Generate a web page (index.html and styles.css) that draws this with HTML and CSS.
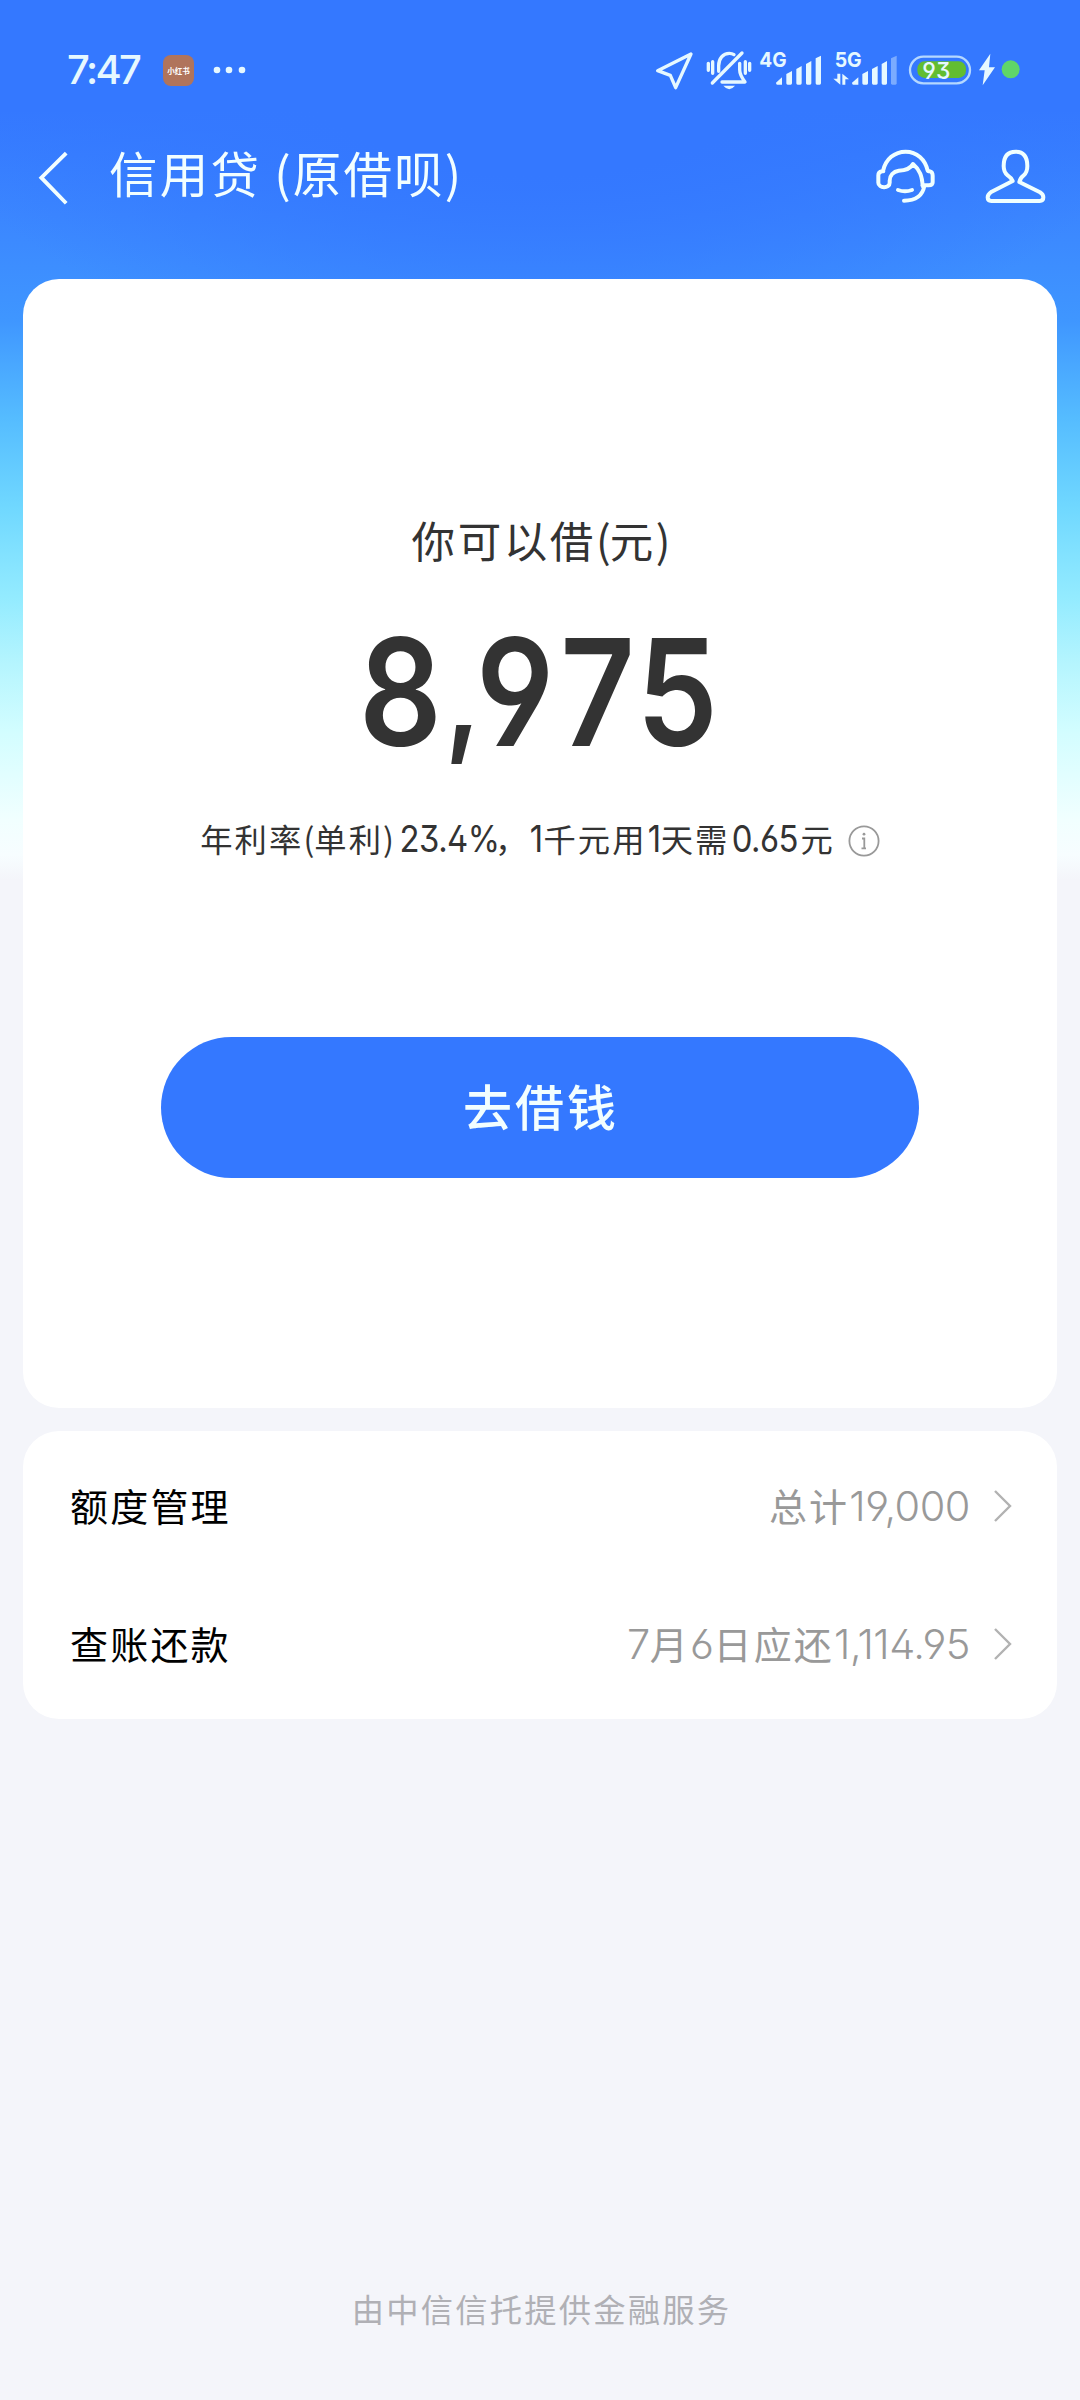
FILE: index.html
```html
<!DOCTYPE html>
<html lang="zh-CN">
<head>
<meta charset="utf-8">
<title>信用贷</title>
<link rel="stylesheet" href="styles.css">
</head>
<body>
<div class="screen">
  <div class="status">
    <span class="time">7:47</span>
    <span class="app-badge">小红书</span>
    <svg class="dots" viewBox="0 0 36 10"><circle cx="5" cy="5" r="3.3"/><circle cx="17" cy="5" r="3.3"/><circle cx="30" cy="5" r="3.3"/></svg>
    <div class="status-icons">
      <svg width="46.67" height="80" viewBox="40 0 140 240"><path class="line" d="M154 72L54 122L92 136L108 173Z"/></svg>
      <svg width="55" height="80" viewBox="180 0 165 240"><path class="line" d="M306 69L217 159M236 124V107C236 86 249 70 268 70Q276 70 282 74M299 100V119Q299 134 315 156H246M205 100V121M218 95V130M329 100V121M316 95V130"/><path class="fill" d="M250 167H285Q268 188 250 167Z"/></svg>
      <svg width="73.33" height="80" viewBox="345 0 220 240"><text class="net" x="358" y="111" textLength="82" lengthAdjust="spacingAndGlyphs">4G</text><path class="fill" d="M408 158L426 142V164H412Q408 164 408 158ZM439 132L456 123V160Q456 164 452 164H443Q439 164 439 160ZM469 117L485 108V160Q485 164 481 164H473Q469 164 469 160ZM498 102L514 93V160Q514 164 510 164H502Q498 164 498 160ZM527 85L543 77V160Q543 164 539 164H531Q527 164 527 160Z"/></svg>
      <svg width="75" height="80" viewBox="565 0 225 240"><text class="net" x="585" y="111" textLength="81" lengthAdjust="spacingAndGlyphs">5G</text><path class="fill" d="M637 158L656 142V164H641Q637 164 637 158ZM668 132L685 123V160Q685 164 681 164H672Q668 164 668 160ZM697 117L714 108V160Q714 164 710 164H701Q697 164 697 160ZM726 102L742 93V160Q742 164 738 164H730Q726 164 726 160ZM593 131H602V164L581 146H593ZM608 164V131L628 148H617V164Z"/><path class="fill" opacity=".4" d="M754 85L771 77V160Q771 164 767 164H758Q754 164 754 160Z"/></svg>
      <svg width="71.67" height="80" viewBox="790 0 215 240"><rect x="811" y="80" width="180" height="80" rx="40" fill="none" stroke="#b5d8ff" stroke-width="7"/><rect x="833" y="94" width="146" height="50" rx="22" fill="#62bd31"/><text class="level" x="848" y="146" textLength="84" lengthAdjust="spacingAndGlyphs">93</text></svg>
      <svg width="23.33" height="80" viewBox="1005 0 70 240"><path class="fill" d="M1051 71L1017 121H1034L1028 166L1065 112H1047Z"/></svg>
      <svg width="41.67" height="80" viewBox="1075 0 125 240"><circle cx="1113" cy="118" r="27" fill="#5fd669"/></svg>
    </div>
  </div>

  <div class="navbar">
    <svg class="back" viewBox="0 0 100 160"><path d="M92 12L21 82L92 155"/></svg>
    <h1>信用贷 (原借呗)</h1>
    <svg class="nav-icons" viewBox="90 0 630 270"><path d="M129 123C137 87 164 65 197 65C230 65 256 88 263 122M149 158V152C149 137 160 124 176 122Q209 121 219 102C240 120 246 138 248 168M130 124H126Q115 126 115 136V158C115 175 149 177 149 158M265 124H270Q278 126 278 137V157Q278 166 266 166H247M253 168Q245 212 192 212"/><path d="M174 180Q195 188 216 180"/><path d="M518 153Q514 143 503 136Q491 127 491 108C491 79 504 65 527 65C550 65 562 79 562 108Q562 127 551 136Q541 143 538 156L600 187Q610 193 610 202Q610 213 599 213H454Q443 213 443 202Q443 193 455 185Z"/></svg>
  </div>

  <section class="card quota">
    <p class="caption">你可以借<span class="paren">(</span>元<span class="paren">)</span></p>
    <p class="amount"><span class="figure">8<span class="comma">,</span><span class="hundreds">9</span>75</span></p>
    <p class="rate">年利率<span class="paren">(</span>单利<span class="paren">)</span><span class="num percent"><span>23.4%</span></span>，<span class="num one"><span>1</span></span>千元用<span class="num one"><span>1</span></span>天需<span class="num cost"><span>0.65</span></span>元<svg class="info" viewBox="0 0 32 32"><circle cx="16" cy="16" r="14.6"/><path d="M14 13.5H16.3V23M13.5 23.3H18"/><circle class="pip" cx="16" cy="9.2" r="1.4"/></svg></p>
    <button class="borrow">去借钱</button>
  </section>

  <section class="card list">
    <div class="row"><span>额度管理</span><span class="value">总计<span class="num">19,000</span></span><svg class="chev" viewBox="0 0 20 34"><path d="M2 2L17 17L2 32"/></svg></div>
    <div class="row"><span>查账还款</span><span class="value"><span class="num">7</span>月<span class="num">6</span>日应还<span class="num">1,114.95</span></span><svg class="chev" viewBox="0 0 20 34"><path d="M2 2L17 17L2 32"/></svg></div>
  </section>

  <footer>由中信信托提供金融服务</footer>
</div>
</body>
</html>
```
FILE: styles.css
```css
* { box-sizing: border-box; margin: 0; padding: 0; }
body { background: #f4f5fa; }
.screen {
  width: 1080px;
  height: 2400px;
  display: flex;
  flex-direction: column;
  font-family: "Noto Sans CJK SC", sans-serif;
  background:
    radial-gradient(ellipse 640px 340px at 50% 40px, #3478ff 40%, rgba(52, 120, 255, 0) 100%),
    linear-gradient(180deg, #3478ff 0, #3478ff 110px, #3b86ff 215px, #3f96ff 320px, #55bcff 418px, #70d8ff 508px, #93ebff 597px, #b5f5fe 664px, #d2fdff 731px, #f1ffff 820px, #f7fdff 855px, #f4f5fa 880px, #f4f5fa 100%);
}
.num { font-family: Inter, "Noto Sans CJK SC", sans-serif; font-weight: 350; font-feature-settings: "ss01", "cv03", "cv04"; }

.status { height: 110px; padding: 30px 0 0 67px; display: flex; align-items: center; color: #e6f8ff; }
.time { width: 96px; font: 500 40px/80px Inter, sans-serif; letter-spacing: -2.6px; }
.app-badge { width: 31px; height: 31px; border-radius: 8px; background: #b0745c; color: #fff; font-size: 7.5px; font-weight: 700; line-height: 31px; text-align: center; }
.dots { width: 36px; height: 10px; margin-left: 18px; fill: #e6f8ff; }
.status-icons { display: flex; margin-left: auto; margin-right: 40px; height: 80px; }
.status-icons svg { flex: none; }
.line { fill: none; stroke: #e6f8ff; stroke-width: 10; stroke-linecap: round; stroke-linejoin: round; }
.fill { fill: #e6f8ff; }
.net { font: 700 62px Inter, sans-serif; fill: #e6f8ff; }
.level { font: 500 70px Inter, sans-serif; fill: #e6f8ff; font-feature-settings: "ss01"; }

.navbar { height: 169px; display: flex; align-items: flex-start; padding: 20px 0 0 33px; }
.back { width: 37px; height: 56px; margin-top: 19px; fill: none; stroke: #f2feff; stroke-width: 11; }
.navbar h1 { margin: -3px 0 0 39px; font-size: 48.5px; line-height: 90px; font-weight: 400; letter-spacing: 2.2px; color: #f2feff; }
.nav-icons { width: 210px; height: 90px; margin-left: auto; fill: none; stroke: #f0ffff; stroke-width: 12; stroke-linecap: round; stroke-linejoin: round; }

.card { background: #fff; border-radius: 36px; margin: 0 23px; flex: none; }
.quota { height: 1129px; display: flex; flex-direction: column; align-items: center; padding-top: 221px; color: #333; }
.caption { padding-left: 1px; font-size: 43.5px; line-height: 80px; letter-spacing: 2.6px; }
.caption .paren { letter-spacing: -1px; }
.amount { margin-top: 32px; height: 160px; font: 600 149px/160px Inter, sans-serif; font-feature-settings: "ss01", "cv03", "cv04"; }
.figure { display: inline-block; margin-right: 1px; letter-spacing: 3px; transform: scaleX(.87); }
.comma { position: relative; top: -7px; font-size: 132px; letter-spacing: -6px; }
.hundreds { letter-spacing: 7px; }
.rate { margin-top: 36px; height: 60px; display: flex; align-items: baseline; font-size: 32.3px; line-height: 60px; letter-spacing: 2.1px; white-space: nowrap; }
.rate .paren { letter-spacing: 0; }
.rate .num { display: flex; justify-content: center; font-size: 36.5px; font-weight: 400; letter-spacing: -.6px; }
.rate .num span { transform: scaleX(.9); }
.rate .percent { width: 101px; padding-left: 9px; }
.one { width: 14px; }
.cost { width: 71px; }
.info { width: 32px; height: 32px; margin: 5px 0 0 13px; align-self: center; fill: none; stroke: #999; stroke-width: 1.8; }
.info .pip { fill: #999; stroke: none; }
.borrow { margin-top: 169px; width: 758px; height: 141px; padding: 0 0 6px 2px; border: 0; border-radius: 71px; background: #3478ff; color: #f2feff; font: 500 49px "Noto Sans CJK SC", sans-serif; letter-spacing: 3px; }

.list { margin-top: 23px; height: 288px; padding: 5px 44px 0 47px; }
.row { height: 138px; display: flex; align-items: center; font-size: 38px; line-height: 60px; letter-spacing: 2.2px; color: #000; }
.row .value { margin-left: auto; color: #999; display: flex; align-items: baseline; }
.value .num { font-size: 41.5px; letter-spacing: -.5px; }
.chev { width: 20px; height: 34px; margin: 2px 0 0 23px; fill: none; stroke: #b2b2b2; stroke-width: 2.4; }

footer { margin-top: 559px; padding-left: 3px; text-align: center; font-size: 32.3px; line-height: 60px; letter-spacing: 2.2px; color: #b0b0b5; }
```
